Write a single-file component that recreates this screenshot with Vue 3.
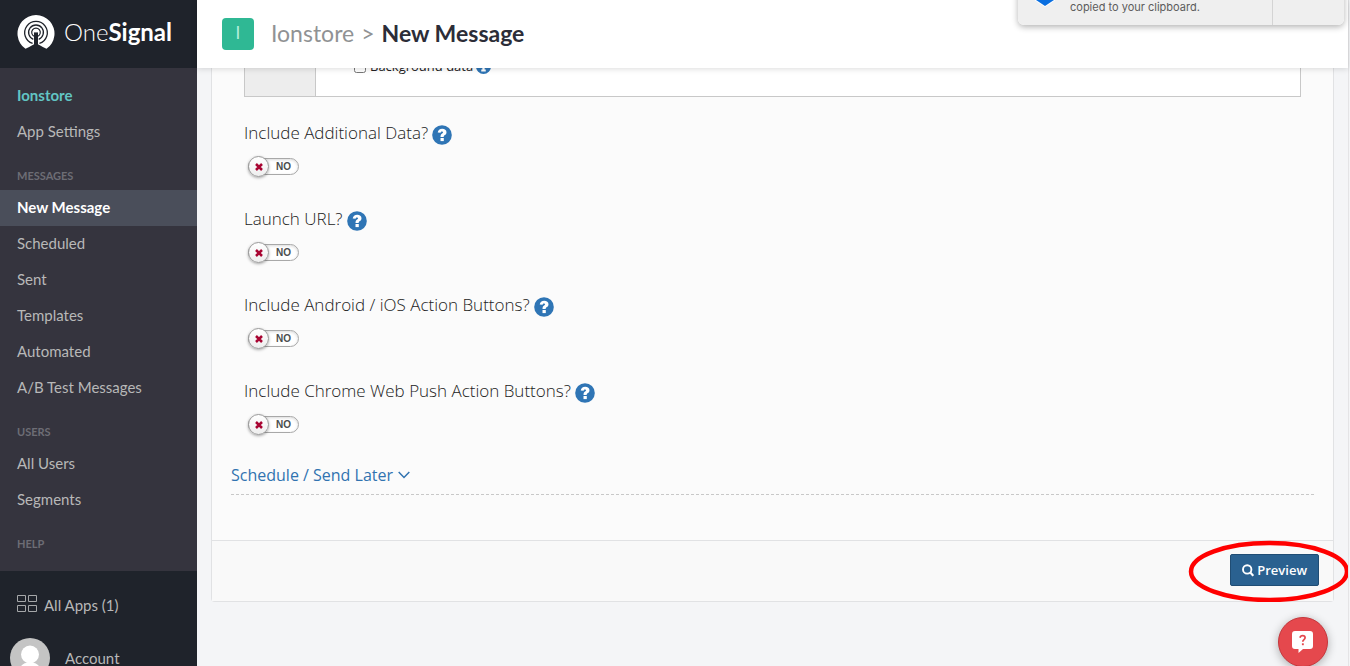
<script setup>
import { ref } from 'vue'

const groups = [
  { title: '', items: ['Ionstore', 'App Settings'] },
  { title: 'MESSAGES', items: ['New Message', 'Scheduled', 'Sent', 'Templates', 'Automated', 'A/B Test Messages'] },
  { title: 'USERS', items: ['All Users', 'Segments'] },
  { title: 'HELP', items: [] },
]

const options = ref([
  { id: 'data', label: 'Include Additional Data?', on: false },
  { id: 'url', label: 'Launch URL?', on: false },
  { id: 'mobile', label: 'Include Android / iOS Action Buttons?', on: false },
  { id: 'chrome', label: 'Include Chrome Web Push Action Buttons?', on: false },
])
const background = ref(false)
</script>

<template>
  <div class="app">
    <aside class="sidebar">
      <a class="brand" href="#">
        <svg class="logo" viewBox="0 0 38 36" aria-hidden="true">
          <path d="M8.500 34.800A18.500 18.500 0 1 1 29.500 34.800Q25.500 33 21.500 30.500H16.500Q12.500 33 8.500 34.800z" fill="#fff" />
          <g fill="none" stroke="#1f232b">
            <path d="M15.600 29.400a11.300 11.300 0 1 1 6.800 0" stroke-width="1.300" />
            <path d="M16.300 25.300a7.400 7.400 0 1 1 5.400 0" stroke-width="1.300" />
            <path d="M17 22.200a4.300 4.300 0 1 1 4 0" stroke-width="1.200" />
          </g>
          <path d="M17 18.400h4V36h-4z" fill="#1f232b" />
        </svg>
        <span class="brand-name">One<b>Signal</b></span>
      </a>
      <nav class="nav">
        <template v-for="g in groups" :key="g.title">
          <h2 v-if="g.title" class="nav-title">{{ g.title }}</h2>
          <a
            v-for="item in g.items"
            :key="item"
            href="#"
            class="nav-link"
            :class="{ current: item === 'Ionstore', active: item === 'New Message' }"
          >{{ item }}</a>
        </template>
      </nav>
      <div class="side-foot">
        <a class="foot-link" href="#">
          <svg class="grid-icon" viewBox="0 0 20 17" fill="none" stroke="#a5a7a9" aria-hidden="true">
            <path d="M.5.500h8v6h-8zM11.500.500h8v6h-8zM.5 10.500h8v6h-8zM11.500 10.500h8v6h-8z" />
          </svg>
          All Apps (1)
        </a>
        <a class="account" href="#">
          <svg class="avatar" viewBox="0 0 40 40" aria-hidden="true">
            <circle cx="20" cy="20" r="20" fill="#c4c4c4" />
            <circle cx="20" cy="16.500" r="9" fill="#fff" />
            <path d="M9 35c0-7 4-10.500 11-10.500S31 28 31 35z" fill="#fff" />
          </svg>
          Account
        </a>
      </div>
    </aside>

    <div class="main">
      <header class="topbar">
        <span class="app-badge">I</span>
        <h1 class="crumbs"><a href="#">Ionstore</a><span class="sep">&gt;</span><strong>New Message</strong></h1>
        <div class="toast" role="status">
          <svg class="toast-icon" viewBox="0 0 20 20" aria-hidden="true">
            <path d="M0 0h20v12.500L10 19 0 12.500z" fill="#fff" />
            <path d="M1 0h18v12L10 18 1 12z" fill="#0a6fe0" />
          </svg>
          <p>copied to your clipboard.</p>
        </div>
      </header>

      <main class="content">
        <section class="panel">
          <div class="panel-body">
            <div class="platform">
              <div class="platform-side"></div>
              <div class="platform-main">
                <input id="background" v-model="background" type="checkbox" />
                <label for="background">Background data</label>
                <svg class="mini" viewBox="0 0 20 20" aria-hidden="true">
                  <circle cx="10" cy="10" r="10" fill="#2f75b5" />
                  <path d="M8.500 3.500h3v3h-3zM7.500 8.500h4V14H13v2.500H7V14h1.500v-3h-1z" fill="#fff" />
                </svg>
              </div>
            </div>

            <div v-for="o in options" :key="o.id" class="option">
              <div class="option-head">
                <label :for="o.id">{{ o.label }}</label>
                <button class="help" type="button" aria-label="Help">
                  <svg viewBox="0 0 20 20" aria-hidden="true">
                    <circle cx="10" cy="10" r="9.800" fill="#2f75b5" />
                    <path d="M5.700 7.600C6 5 7.700 3.700 10.200 3.700c2.500 0 4.300 1.400 4.300 3.500 0 1.600-.8 2.400-1.900 3.100-.7.500-.9.800-.9 1.600H8.500c0-1.900.5-2.600 1.700-3.400.7-.5.9-.7.900-1.200 0-.6-.4-.9-1.100-.9-.8 0-1.200.5-1.400 1.400z" fill="#fff" />
                    <path d="M8.500 13h3.300v3.100H8.500z" fill="#fff" />
                  </svg>
                </button>
              </div>
              <div class="toggle">
                <input :id="o.id" v-model="o.on" type="checkbox" />
                <span class="track">{{ o.on ? 'YES' : 'NO' }}</span>
                <span class="knob">
                  <svg viewBox="0 0 8 8" aria-hidden="true"><path d="M1 1l6 6M7 1L1 7" stroke="#a80532" stroke-width="2.500" /></svg>
                </span>
              </div>
            </div>
          </div>

          <div class="schedule">
            <button type="button">
              Schedule / Send Later
              <svg viewBox="0 0 12 8" aria-hidden="true"><path d="M.7 1l5.300 5.500L11.300 1" fill="none" stroke="#3173b0" stroke-width="1.500" /></svg>
            </button>
          </div>

          <footer class="panel-foot">
            <div class="preview-wrap">
              <button class="preview" type="button">
                <svg viewBox="0 0 12 13" fill="none" stroke="#fff" aria-hidden="true">
                  <circle cx="5.200" cy="5.400" r="4.200" stroke-width="1.900" />
                  <path d="M8.300 8.600l3 3.200" stroke-width="2.200" />
                </svg>
                Preview
              </button>
              <svg class="ring" viewBox="0 0 162 62" aria-hidden="true">
                <ellipse cx="81" cy="31.500" rx="78" ry="28.500" fill="none" stroke="#f00" stroke-width="4.500" />
              </svg>
            </div>
          </footer>
        </section>
      </main>

      <button class="chat" type="button" aria-label="Support chat">
        <svg viewBox="0 0 24 24" aria-hidden="true">
          <path d="M4 1h15a3 3 0 0 1 3 3v12a3 3 0 0 1-3 3h-7l-4.500 4v-4H4a3 3 0 0 1-3-3V4a3 3 0 0 1 3-3z" fill="#fff" />
          <path d="M9 7.800c.3-1.400 1.200-2.100 2.600-2.100 1.500 0 2.500.8 2.500 2.100 0 1.800-2.300 1.900-2.300 3.900" fill="none" stroke="#e5484d" stroke-width="1.700" />
          <path d="M10.900 13.300h1.900v1.900h-1.900z" fill="#e5484d" />
        </svg>
      </button>
    </div>
  </div>
</template>

<style>
body {
  background: #f4f5f7;
}
</style>

<style scoped>
* {
  box-sizing: border-box;
}
h1,
h2,
p {
  margin: 0;
  font-weight: 400;
}
a {
  text-decoration: none;
}
button {
  font: inherit;
  cursor: pointer;
}
.app {
  display: flex;
  height: 100vh;
  overflow: hidden;
  font-family: "Open Sans", sans-serif;
  color: #222;
}
.sidebar {
  display: flex;
  flex-direction: column;
  flex: 0 0 197px;
  background: #35343e;
  font-family: Lato, sans-serif;
  font-size: 15px;
}
.brand {
  display: flex;
  align-items: center;
  flex: 0 0 68px;
  gap: 9px;
  padding: 0 17px 4px;
  background: #1f232b;
  color: #fff;
}
.logo {
  width: 38px;
  height: 36px;
}
.brand-name {
  font-size: 24px;
  font-weight: 300;
  line-height: 28px;
}
.brand-name b {
  font-weight: 700;
}
.nav {
  flex: 1;
  padding-top: 10px;
  overflow: hidden;
}
.nav-link {
  display: block;
  padding: 0 17px 2px;
  line-height: 34px;
  color: #b8b8b8;
}
.nav-link.current {
  color: #62c5c4;
  font-weight: 700;
}
.nav-link.active {
  background: #4a4e5a;
  color: #fff;
  font-weight: 700;
}
.nav-title {
  padding: 16px 17px 4px;
  font-size: 11px;
  line-height: 20px;
  color: #6d6d75;
  font-weight: 700;
}
.side-foot {
  flex: 0 0 95px;
  overflow: hidden;
  background: #1f232b;
}
.foot-link {
  display: flex;
  align-items: center;
  gap: 7px;
  height: 67px;
  color: #b8b8b8;
  padding: 0 17px;
}
.grid-icon {
  width: 20px;
  height: 17px;
  margin-bottom: 2px;
}
.account {
  display: flex;
  align-items: center;
  gap: 15px;
  padding-left: 10px;
  line-height: 38px;
  color: #b8b8b8;
}
.avatar {
  width: 40px;
  height: 40px;
}
.main {
  position: relative;
  display: flex;
  flex-direction: column;
  flex: 1;
  min-width: 0;
  margin-right: 1px;
  border-right: 1px solid #e4e4e6;
}
.topbar {
  position: relative;
  z-index: 2;
  display: flex;
  align-items: center;
  flex: 0 0 68px;
  gap: 17px;
  padding-left: 25px;
  background: #fff;
  box-shadow: 0 1px 6px rgba(0, 0, 0, 0.14);
}
.app-badge {
  width: 32px;
  height: 32px;
  border-radius: 4px;
  background: #2fb894;
  color: #b4f0dc;
  font: 17px/30px Lato, sans-serif;
  text-align: center;
}
.crumbs {
  padding-bottom: 2px;
  font-family: Lato, sans-serif;
  font-size: 23px;
  line-height: 32px;
}
.crumbs a,
.sep {
  color: #909294;
}
.sep {
  margin: 0 7px;
}
.crumbs strong {
  color: #2c2d38;
  font-weight: 700;
}
.toast {
  position: absolute;
  top: -40px;
  right: 4px;
  width: 326px;
  height: 65px;
  padding: 40px 0 0 52px;
  border-radius: 6px;
  background: linear-gradient(90deg, #efefef 254px, #d4d4d4 254px, #d4d4d4 255px, #efefef 255px);
  box-shadow: 0 2px 6px rgba(0, 0, 0, 0.3);
  color: #5c5c5c;
  font: 11px/14px Inter, sans-serif;
}
.toast-icon {
  position: absolute;
  left: 17px;
  top: 28px;
  width: 20px;
  height: 20px;
}
.content {
  flex: 1;
  min-height: 0;
  padding: 0 14px;
  overflow: hidden;
  background: #f4f5f7;
}
.panel {
  border: 1px solid #e1e2e4;
  border-top: 0;
  border-radius: 0 0 4px 4px;
  background: #fbfbfb;
}
.panel-body {
  padding: 0 32px;
}
.platform {
  display: flex;
  height: 57px;
  margin-top: -28px;
  border: 1px solid #c8c8c8;
  background: #fff;
}
.platform-side {
  flex: 0 0 71px;
  border-right: 1px solid #c8c8c8;
  background: #ededed;
}
.platform-main {
  display: flex;
  align-items: flex-start;
  padding: 13px 0 0 38px;
  font-size: 13px;
  line-height: 24px;
}
.platform-main input {
  width: 12px;
  height: 12px;
  margin: 7px 4px 0 0;
}
.mini {
  width: 15px;
  height: 15px;
  margin: 5px 0 0 3px;
}
.option {
  height: 86px;
  padding-top: 24px;
}
.option-head {
  display: flex;
  align-items: flex-start;
  gap: 4px;
  height: 28px;
  font-size: 17px;
  font-weight: 300;
  line-height: 24px;
}
.help {
  display: flex;
  padding: 4px 0 0;
  border: 0;
  background: none;
}
.help svg {
  width: 20px;
  height: 20px;
}
.toggle {
  position: relative;
  display: flex;
  align-items: center;
  width: 51px;
  height: 21px;
  margin: 7px 0 0 4px;
}
.toggle input {
  position: absolute;
  inset: 0;
  z-index: 2;
  width: 100%;
  height: 100%;
  margin: 0;
  opacity: 0;
}
.track {
  flex: 1;
  height: 17px;
  padding-left: 27px;
  border: 1px solid #a8a8a8;
  border-radius: 9px;
  background: #fff;
  box-shadow: inset 0 1px 3px rgba(0, 0, 0, 0.15);
  color: #4a4e4e;
  font: 700 10px/15px "Liberation Sans", sans-serif;
}
.knob {
  position: absolute;
  left: 0;
  top: 0;
  display: grid;
  place-items: center;
  width: 21px;
  height: 21px;
  border: 1px solid #999;
  border-radius: 50%;
  background: linear-gradient(#fff, #eee);
  box-shadow: 0 1px 3px rgba(0, 0, 0, 0.35);
}
.knob svg {
  width: 8px;
  height: 8px;
}
.schedule {
  height: 54px;
  margin: 0 19px 45px;
  padding-top: 22px;
  border-bottom: 1px dashed #c8c8c8;
}
.schedule button {
  display: flex;
  align-items: center;
  gap: 5px;
  padding: 0;
  border: 0;
  background: none;
  color: #3173b0;
  font-size: 16px;
  line-height: 24px;
}
.schedule svg {
  width: 12px;
  height: 8px;
}
.panel-foot {
  display: flex;
  justify-content: flex-end;
  padding: 13px 14px 15px;
  border-top: 1px solid #e1e2e4;
  background: #f9f9f9;
}
.preview-wrap {
  position: relative;
}
.preview {
  display: flex;
  align-items: center;
  gap: 3px;
  height: 32px;
  padding: 0 11px;
  border: 1px solid #204d74;
  border-radius: 2px;
  background: #2a6190;
  color: #fff;
  font-size: 13px;
  font-weight: 600;
}
.preview svg {
  width: 12px;
  height: 13px;
}
.ring {
  position: absolute;
  top: -14px;
  right: -31px;
  width: 162px;
  height: 62px;
  pointer-events: none;
}
.chat {
  position: absolute;
  right: 20px;
  bottom: -1px;
  display: grid;
  place-items: center;
  width: 50px;
  height: 50px;
  padding: 0;
  border: 1px solid #c5373c;
  border-radius: 50%;
  background: #e5484d;
  box-shadow: 0 2px 10px rgba(0, 0, 0, 0.3);
}
.chat svg {
  width: 24px;
  height: 24px;
}
</style>
